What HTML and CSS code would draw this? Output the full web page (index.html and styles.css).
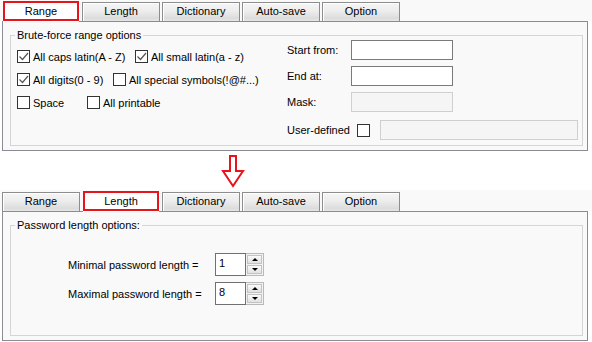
FILE: index.html
```html
<!DOCTYPE html>
<html>
<head>
<meta charset="utf-8" />
<title>Brute-force options</title>
<link rel="stylesheet" href="styles.css">
</head>
<body>
<div class="shot">

<div class="strip">
	<div class="tab on">Range</div>
	<div class="tab">Length</div>
	<div class="tab">Dictionary</div>
	<div class="tab">Auto-save</div>
	<div class="tab">Option</div>
</div>
<div class="panel">
	<fieldset class="group">
		<legend>Brute-force range options</legend>
		<div class="cols">
			<div class="left">
				<div class="row">
					<label class="chk w1"><span class="box"><svg viewBox="0 0 11 11"><polyline points="1.5,5.5 4.5,8.5 10,2" /></svg></span>All caps latin(A - Z)</label>
					<label class="chk"><span class="box"><svg viewBox="0 0 11 11"><polyline points="1.5,5.5 4.5,8.5 10,2" /></svg></span>All small latin(a - z)</label>
				</div>
				<div class="row">
					<label class="chk w2"><span class="box"><svg viewBox="0 0 11 11"><polyline points="1.5,5.5 4.5,8.5 10,2" /></svg></span>All digits(0 - 9)</label>
					<label class="chk"><span class="box"></span>All special symbols(!@#...)</label>
				</div>
				<div class="row">
					<label class="chk w3"><span class="box"></span>Space</label>
					<label class="chk"><span class="box"></span>All printable</label>
				</div>
			</div>
			<div class="right">
				<div class="frow"><span class="flabel">Start from:</span><input class="field" type="text" /></div>
				<div class="frow"><span class="flabel">End at:</span><input class="field" type="text" /></div>
				<div class="frow"><span class="flabel">Mask:</span><input class="field off" type="text" disabled /></div>
				<div class="frow urow"><span class="ulabel">User-defined</span><span class="box"></span><input class="field off wide" type="text" disabled /></div>
			</div>
		</div>
	</fieldset>
</div>

<div class="arrow">
	<svg width="24" height="34" viewBox="0 0 24 34"><polygon points="9,2 15,2 15,17 22,17 12,32 2,17 9,17" /></svg>
</div>

<div class="strip">
	<div class="tab">Range</div>
	<div class="tab on">Length</div>
	<div class="tab">Dictionary</div>
	<div class="tab">Auto-save</div>
	<div class="tab">Option</div>
</div>
<div class="panel">
	<fieldset class="group">
		<legend>Password length options:</legend>
		<div class="lens">
			<div class="lrow">
				<span class="llabel">Minimal password length =</span>
				<div class="spin"><span class="spin-val">1</span><span class="spin-btns"><span class="up"></span><span class="down"></span></span></div>
			</div>
			<div class="lrow">
				<span class="llabel">Maximal password length =</span>
				<div class="spin"><span class="spin-val">8</span><span class="spin-btns"><span class="up"></span><span class="down"></span></span></div>
			</div>
		</div>
	</fieldset>
</div>

</div><!--shot end-->
</body>
</html>
```

FILE: styles.css
```css
*{
	box-sizing:border-box;
}
body{
	margin:0;
	background-color:#fff;
	color:#000;
	font-family:"Liberation Sans", Arial, sans-serif;
	font-size:11px;
}
.shot{
	width:592px;
}
/* tab strip */
.strip{
	display:flex;
	align-items:flex-end;
	height:21px;
	padding-left:2px;
	background-color:#f9f9f9;
}
.tab{
	width:78px;
	height:19px;
	margin-right:2px;
	border:1px solid #8d8d8d;
	border-bottom:none;
	background:linear-gradient(#f5f5f5, #ededed 45%, #dcdcdc 85%, #e6e6e6);
	box-shadow:inset 1px 1px 0 #fff;
	text-align:center;
	line-height:17px;
}
.tab.on{
	position:relative;
	z-index:1;
	width:76px;
	height:20px;
	margin:0 3px 0 1px;
	border:2px solid #e8141b;
	background:#fff;
	box-shadow:0 1px 0 #fff;
	line-height:16px;
}
/* panels */
.panel{
	display:flex;
	height:130px;
	margin:0 4px 0 2px;
	padding:7px 4px 4px 7px;
	border:1px solid #898c95;
	background-color:#f9f9f9;
}
.group{
	flex:1;
	min-width:0;
	margin:0;
	padding:3px 0 0 6px;
	border:1px solid #d5d5d5;
}
.group legend{
	margin-left:-2px;
	padding:0 2px;
	line-height:13px;
}
.cols{
	display:flex;
}
.left{
	width:270px;
}
.row{
	display:flex;
	align-items:center;
	height:23px;
}
.chk{
	display:flex;
	align-items:center;
	gap:3px;
	white-space:nowrap;
}
.w1{ width:118px; }
.w2{ width:96px; }
.w3{ width:70px; }
.box{
	display:block;
	flex:none;
	width:13px;
	height:13px;
	border:1px solid #333;
	background-color:#fff;
}
.box svg{
	display:block;
	width:11px;
	height:11px;
}
.box polyline{
	fill:none;
	stroke:#555;
	stroke-width:1.2;
}
.right{
	display:flex;
	flex-direction:column;
	gap:6px;
	margin-top:-5px;
}
.frow{
	display:flex;
	align-items:center;
	height:20px;
}
.flabel{
	width:64px;
}
.ulabel{
	width:70px;
}
.urow{
	margin-top:2px;
}
.field{
	width:102px;
	height:20px;
	margin:0;
	padding:0 2px;
	border:1px solid #7a7a7a;
	background-color:#fff;
	font:inherit;
}
.field.off{
	border-color:#cfcfcf;
	background-color:#f5f5f5;
}
.field.wide{
	width:198px;
	margin-left:10px;
}
/* arrow between shots */
.arrow{
	height:39px;
	padding:3px 0 0 221px;
}
.arrow svg{
	display:block;
}
.arrow polygon{
	fill:none;
	stroke:#e8141b;
	stroke-width:2;
}
/* length tab */
.lens{
	display:flex;
	flex-direction:column;
	gap:6px;
	padding:18px 0 0 51px;
}
.lrow{
	display:flex;
	align-items:center;
}
.llabel{
	width:147px;
}
.spin{
	display:flex;
	height:23px;
}
.spin-val{
	width:31px;
	padding-left:3px;
	border:1px solid #707070;
	background-color:#fff;
	line-height:19px;
}
.spin-btns{
	display:flex;
	flex-direction:column;
	gap:1px;
	width:18px;
	padding:1px;
	border:1px solid #b9b9b9;
	border-left:none;
	background-color:#f2f2f2;
}
.spin-btns span{
	display:flex;
	flex:1;
	align-items:center;
	justify-content:center;
	border:1px solid #c3c3c3;
	background:linear-gradient(#fafafa, #e0e0e0);
}
.up::after,
.down::after{
	content:"";
	border-left:3px solid transparent;
	border-right:3px solid transparent;
}
.up::after{
	border-bottom:3px solid #000;
}
.down::after{
	border-top:3px solid #000;
}
```
